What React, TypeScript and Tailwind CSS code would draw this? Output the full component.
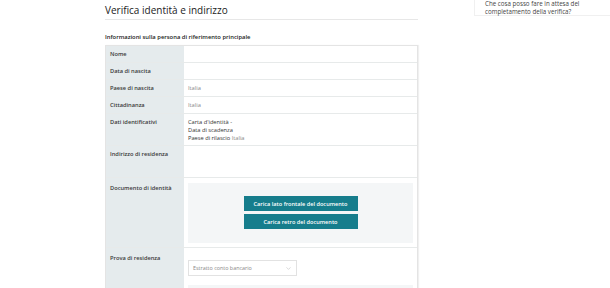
import { ChevronDown } from 'lucide-react';

function Row({ label, children, h }: { label: string; children?: React.ReactNode; h: string }) {
  return (
    <div className={`flex border-b border-[#e7eaea] text-[5.7px] leading-[8px] ${h}`}>
      <div className="w-[78px] shrink-0 bg-[#e5ebed] px-[4px] pt-[4px] font-semibold text-[#3a3a3a]">{label}</div>
      <div className="flex-1 px-[4px] pt-[4px]">{children}</div>
    </div>
  );
}

export default function App() {
  return (
    <div className="flex h-[288px] w-[610px] overflow-hidden bg-white font-['Open_Sans',sans-serif] text-[#333]">
      <div className="w-[418px] shrink-0 pl-[105px]">
        <div className="border-b border-[#e7e7e7] pb-[3px] pt-[5px]">
          <h1 className="text-[10px] leading-[11px] text-[#222]">Verifica identità e indirizzo</h1>
        </div>
        <p className="mt-[13px] text-[5.85px] leading-[8px] font-semibold text-[#222]">Informazioni sulla persona di riferimento principale</p>
        <div className="mt-[4px] border border-[#e4e4e4] shadow-[1px_0_1px_rgba(0,0,0,0.06)]">
          <Row label="Nome" h="h-[17px]" />
          <Row label="Data di nascita" h="h-[17px]" />
          <Row label="Paese di nascita" h="h-[17px]">
            <span className="text-[#888]">Italia</span>
          </Row>
          <Row label="Cittadinanza" h="h-[17px]">
            <span className="text-[#888]">Italia</span>
          </Row>
          <Row label="Dati identificativi" h="h-[32px]">
            <div className="text-[#333]">
              <div>Carta d'identità -</div>
              <div>Data di scadenza</div>
              <div>
                Paese di rilascio <span className="text-[#888]">Italia</span>
              </div>
            </div>
          </Row>
          <Row label="Indirizzo di residenza" h="h-[32px]" />
          <div className="flex h-[70px] border-b border-[#e7eaea] text-[5.7px] leading-[8px]">
            <div className="w-[78px] shrink-0 bg-[#e5ebed] px-[4px] pt-[6px] font-semibold text-[#3a3a3a]">Documento di identità</div>
            <div className="flex-1 px-[4px] pb-[4px] pt-[5px]">
              <div className="flex h-full flex-col items-center gap-[3px] bg-[#f4f6f7] pt-[13px]">
                <button className="h-[15px] w-[114px] bg-[#167d8c] text-[5.6px] font-semibold text-white">Carica lato frontale del documento</button>
                <button className="h-[15px] w-[114px] bg-[#167d8c] text-[5.6px] font-semibold text-white">Carica retro del documento</button>
              </div>
            </div>
          </div>
          <div className="flex h-[50px] text-[5.7px] leading-[8px]">
            <div className="w-[78px] shrink-0 bg-[#e5ebed] px-[4px] pt-[6px] font-semibold text-[#3a3a3a]">Prova di residenza</div>
            <div className="flex-1 px-[4px] pt-[12px]">
              <div className="flex h-[16px] w-[109px] items-center justify-between border border-[#e2e2e2] bg-white px-[4px] text-[5.4px] text-[#888]">
                <span>Estratto conto bancario</span>
                <ChevronDown size={7} strokeWidth={1.5} color="#aaa" />
              </div>
              <div className="mt-[9px] h-[20px] bg-[#f4f6f7]" />
            </div>
          </div>
        </div>
      </div>
      <div className="ml-[56px] h-[16px] flex-1 border-b border-l border-[#f0f0f0] pl-[10px]">
        <p className="text-[6.2px] leading-[7.5px] text-[#444]">
          Che cosa posso fare in attesa del
          <br />
          completamento della verifica?
        </p>
      </div>
    </div>
  );
}
